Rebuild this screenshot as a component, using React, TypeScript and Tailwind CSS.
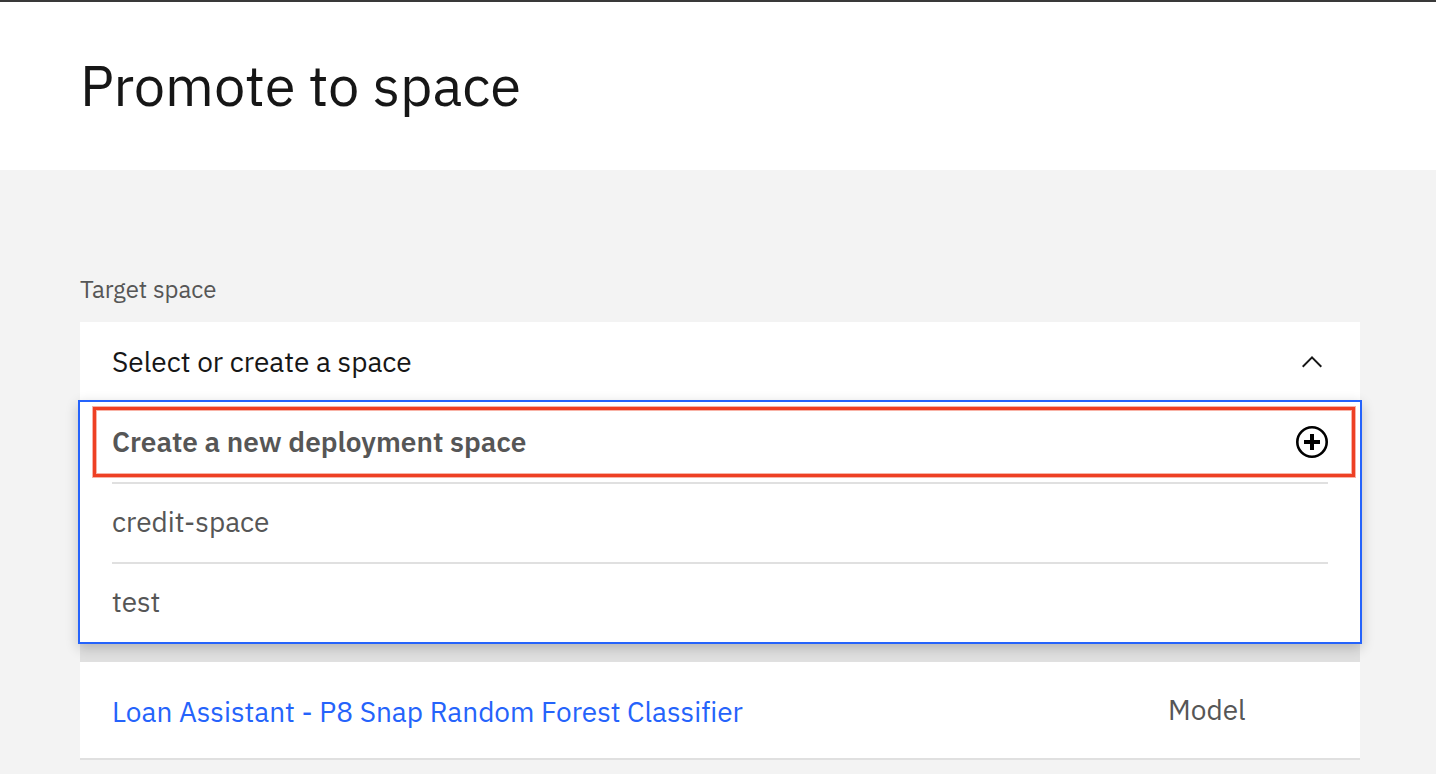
import { useState } from "react";

const spaces = ["credit-space", "test"];

const assets = [
  { name: "Loan Assistant - P8 Snap Random Forest Classifier", type: "Model" },
];

function ChevronIcon({ open }: { open: boolean }) {
  return (
    <svg
      viewBox="0 0 16 16"
      className={open ? "size-8 shrink-0 rotate-180" : "size-8 shrink-0"}
      fill="currentColor"
      aria-hidden="true"
    >
      <path d="M8 11L3 6 3.7 5.3 8 9.6 12.3 5.3 13 6z" />
    </svg>
  );
}

function AddCircleIcon() {
  return (
    <svg viewBox="0 0 32 32" className="size-8 shrink-0" fill="none" stroke="#000" aria-hidden="true">
      <circle cx="16" cy="16" r="14.7" strokeWidth="2.6" />
      <path d="M16 8v16M8 16h16" strokeWidth="4" />
    </svg>
  );
}

function SpacePicker() {
  const [open, setOpen] = useState(true);
  const [selected, setSelected] = useState("Select or create a space");

  const choose = (name: string) => {
    setSelected(name);
    setOpen(false);
  };

  return (
    <div>
      <label htmlFor="target-space" className="block pb-0.5 text-2xl leading-[30px] text-[#565656]">
        Target space
      </label>
      <div className="relative mt-4">
        <button
          id="target-space"
          type="button"
          aria-expanded={open}
          onClick={() => setOpen(!open)}
          className="flex h-20 w-full items-center justify-between bg-white px-8 text-left text-[#161616]"
        >
          {selected}
          <ChevronIcon open={open} />
        </button>
        {open && (
          <ul className="absolute -inset-x-0.5 top-full z-10 -mt-0.5 border-2 border-[#2563fb] bg-white text-[#565656] shadow-[0_4px_12px_rgba(0,0,0,0.2)]">
            <li className="relative px-8">
              <button type="button" className="flex h-20 w-full items-center justify-between text-left font-semibold">
                Create a new deployment space
                <AddCircleIcon />
              </button>
              <span className="pointer-events-none absolute top-[5px] right-[5px] bottom-[5px] left-[13px] border-3 border-[#ee4024] ring-1 ring-[#ee4024]/40 inset-ring-1 inset-ring-[#ee4024]/40" />
            </li>
            {spaces.map((space) => (
              <li key={space} className="px-8">
                <button
                  type="button"
                  onClick={() => choose(space)}
                  className="flex h-20 w-full items-center border-t-2 border-[#e0e0e0] pb-0.5 text-left"
                >
                  {space}
                </button>
              </li>
            ))}
          </ul>
        )}
      </div>
    </div>
  );
}

function AssetTable() {
  return (
    <table className="mt-45 w-full table-fixed border-collapse text-left">
      <colgroup>
        <col />
        <col className="w-56" />
      </colgroup>
      <thead aria-hidden="true">
        <tr className="h-20 bg-[#e0e0e0]">
          <td />
          <td />
        </tr>
      </thead>
      <tbody>
        {assets.map((asset) => (
          <tr key={asset.name} className="h-24 bg-white shadow-[0_2px_0_#e0e0e0]">
            <td className="px-8 pt-1">
              <a href="#asset" className="text-[#2563fb]">
                {asset.name}
              </a>
            </td>
            <td className="px-8 text-[#565656]">{asset.type}</td>
          </tr>
        ))}
      </tbody>
    </table>
  );
}

export default function App() {
  return (
    <div className="min-h-screen bg-[#f3f3f3] font-['IBM_Plex_Sans','Noto_Sans',sans-serif] text-[28px] leading-9 [font-variant-ligatures:none]">
      <header className="flex h-[170px] items-center border-t-2 border-[#393939] bg-white px-20 pb-0.5">
        <h1 className="text-[56px] leading-16 text-[#161616]">Promote to space</h1>
      </header>
      <main className="pt-26 pr-19 pb-3 pl-20">
        <SpacePicker />
        <AssetTable />
      </main>
    </div>
  );
}
